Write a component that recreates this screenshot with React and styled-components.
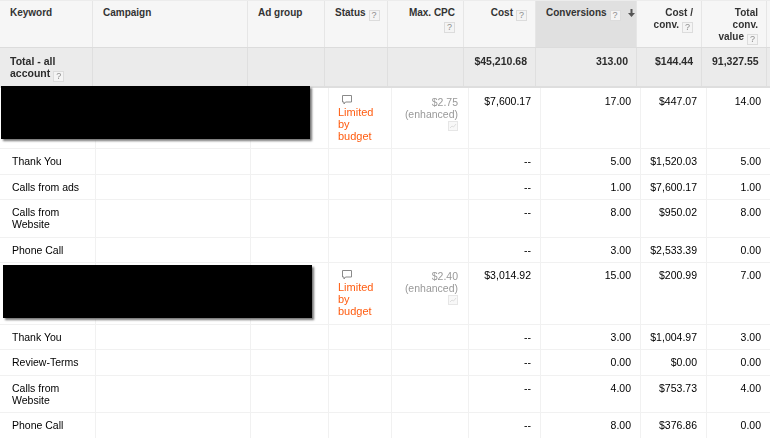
import React from 'react';
import styled, {createGlobalStyle} from 'styled-components';

const GlobalStyle = createGlobalStyle`
  html, body {
    margin: 0;
    padding: 0;
    background: #fff;
  }
`;

const Page = styled.div`
  position: relative;
  width: 770px;
  height: 438px;
  overflow: hidden;
  font-family: 'Liberation Sans', Arial, sans-serif;
  font-size: 10.5px;
  line-height: 12px;
  color: #000;
  filter: blur(0.35px);
`;

const HEAD_COLS = '93px 155px 77px 63px 76px 72px 101px 65px 65px 3px';
const BODY_COLS = '96px 155px 78px 63px 77px 72px 100px 66px 63px';

const HeadRow = styled.div`
  display: grid;
  grid-template-columns: ${HEAD_COLS};
  height: ${props => props.$height}px;
  box-sizing: border-box;
  background: ${props => (props.$total ? '#ebebeb' : '#f6f6f6')};
  border-top: ${props => (props.$total ? 'none' : '1px solid #ececec')};
  border-bottom: ${props => (props.$total ? '2px solid #dedede' : '1px solid #dcdcdc')};
  font-weight: bold;
  font-size: ${props => (props.$total ? '10.5px' : '10px')};
  color: ${props => (props.$total ? '#2c2c2c' : '#333')};
`;

const HeadCell = styled.div`
  box-sizing: border-box;
  padding: ${props => (props.$total ? '7px 8px 0 10px' : '6px 8px 0 10px')};
  border-right: 1px solid ${props => (props.$total ? '#dfdfdf' : '#e6e6e6')};
  text-align: ${props => (props.$right ? 'right' : 'left')};
  background: ${props => (props.$sorted ? '#e0e0e0' : 'transparent')};
  white-space: nowrap;
`;

const Help = styled.span`
  display: inline-block;
  box-sizing: border-box;
  width: 11px;
  height: 11px;
  margin-left: 3px;
  border: 1px solid #dcdcdc;
  background: #f4f4f4;
  color: #8c8c8c;
  font-size: 9px;
  line-height: 9px;
  font-weight: normal;
  text-align: center;
  vertical-align: -2px;
`;

const SortArrow = styled.svg`
  width: 7px;
  height: 8px;
  margin-left: 7px;
  vertical-align: -1px;
`;

const Row = styled.div`
  display: grid;
  grid-template-columns: ${BODY_COLS};
  height: ${props => props.$height}px;
  box-sizing: border-box;
  border-bottom: 1px solid #f1f1f1;
`;

const Cell = styled.div`
  box-sizing: border-box;
  padding: ${props => props.$top || 6}px 9px 0 ${props => (props.$lead ? 12 : 9)}px;
  border-right: 1px solid #f1f1f1;
  text-align: ${props => (props.$right ? 'right' : 'left')};
  &:last-child {
    border-right: none;
  }
`;

const StatusWrap = styled.div`
  color: #ff5c10;
  font-size: 11px;
`;

const BubbleIcon = styled.svg`
  display: block;
  width: 12px;
  height: 12px;
  margin-left: 3px;
`;

const CpcCell = styled(Cell)`
  padding-right: 10px;
  color: #999;
`;

const TrendBox = styled.svg`
  display: block;
  width: 10px;
  height: 10px;
  margin: 1px 0 0 auto;
`;

const Redaction = styled.div`
  position: absolute;
  left: ${props => props.$left}px;
  top: ${props => props.$top}px;
  width: 309px;
  height: 53px;
  background: #000;
  box-shadow: 2px 2px 2px #777;
`;

const rows = [
  {height: 61, campaign: true, cpc: '$2.75', cpcTop: 8, top: 7, cost: '$7,600.17', conv: '17.00', per: '$447.07', total: '14.00'},
  {height: 26, name: 'Thank You', conv: '5.00', per: '$1,520.03', total: '5.00'},
  {height: 25, name: 'Calls from ads', conv: '1.00', per: '$7,600.17', total: '1.00'},
  {height: 38, name: 'Calls from Website', conv: '8.00', per: '$950.02', total: '8.00'},
  {height: 25, name: 'Phone Call', conv: '3.00', per: '$2,533.39', total: '0.00'},
  {height: 62, campaign: true, cpc: '$2.40', cpcTop: 7, cost: '$3,014.92', conv: '15.00', per: '$200.99', total: '7.00'},
  {height: 25, name: 'Thank You', conv: '3.00', per: '$1,004.97', total: '3.00'},
  {height: 26, name: 'Review-Terms', conv: '0.00', per: '$0.00', total: '0.00'},
  {height: 37, name: 'Calls from Website', conv: '4.00', per: '$753.73', total: '4.00'},
  {height: 26, name: 'Phone Call', conv: '8.00', per: '$376.86', total: '0.00'},
];

const Status = () => (
  <StatusWrap>
    <BubbleIcon viewBox="0 0 12 12" fill="none" stroke="#8a8a8a" strokeWidth="1">
      <path d="M1.5 1.5h9v6.5H4.5L3 10V8H1.5z" />
    </BubbleIcon>
    Limited
    <br />
    by
    <br />
    budget
  </StatusWrap>
);

const Trend = () => (
  <TrendBox viewBox="0 0 10 10" fill="none">
    <rect x="0.5" y="0.5" width="9" height="9" fill="#f8f8f8" stroke="#e6e6e6" />
    <path d="M2 7l2-2 1.5 1L8 3" stroke="#dedede" />
  </TrendBox>
);

const App = () => (
  <Page>
    <GlobalStyle />
    <HeadRow $height={48}>
      <HeadCell>Keyword</HeadCell>
      <HeadCell>Campaign</HeadCell>
      <HeadCell>Ad group</HeadCell>
      <HeadCell>
        Status<Help>?</Help>
      </HeadCell>
      <HeadCell $right>
        Max. CPC
        <br />
        <Help>?</Help>
      </HeadCell>
      <HeadCell $right>
        Cost<Help>?</Help>
      </HeadCell>
      <HeadCell $sorted>
        Conversions<Help>?</Help>
        <SortArrow viewBox="0 0 7 8">
          <path d="M2.5 0h2v4H7L3.5 8 0 4h2.5z" fill="#555" />
        </SortArrow>
      </HeadCell>
      <HeadCell $right>
        Cost /
        <br />
        conv.<Help>?</Help>
      </HeadCell>
      <HeadCell $right>
        Total
        <br />
        conv.
        <br />
        value<Help>?</Help>
      </HeadCell>
      <HeadCell />
    </HeadRow>
    <HeadRow $height={40} $total>
      <HeadCell $total>
        Total - all
        <br />
        account<Help>?</Help>
      </HeadCell>
      <HeadCell $total />
      <HeadCell $total />
      <HeadCell $total />
      <HeadCell $total />
      <HeadCell $total $right>
        $45,210.68
      </HeadCell>
      <HeadCell $total $right>
        313.00
      </HeadCell>
      <HeadCell $total $right>
        $144.44
      </HeadCell>
      <HeadCell $total $right>
        91,327.55
      </HeadCell>
      <HeadCell $total />
    </HeadRow>
    {rows.map((row, i) => (
      <Row key={i} $height={row.height}>
        <Cell $lead>{row.name}</Cell>
        <Cell />
        <Cell />
        <Cell>{row.campaign && <Status />}</Cell>
        {row.campaign ? (
          <CpcCell $right $top={row.cpcTop}>
            {row.cpc}
            <br />
            (enhanced)
            <Trend />
          </CpcCell>
        ) : (
          <Cell />
        )}
        <Cell $right $top={row.top}>{row.cost || '--'}</Cell>
        <Cell $right $top={row.top}>{row.conv}</Cell>
        <Cell $right $top={row.top}>{row.per}</Cell>
        <Cell $right $top={row.top}>{row.total}</Cell>
      </Row>
    ))}
    <Redaction $left={1} $top={86} />
    <Redaction $left={3} $top={265} />
  </Page>
);

export default App;
